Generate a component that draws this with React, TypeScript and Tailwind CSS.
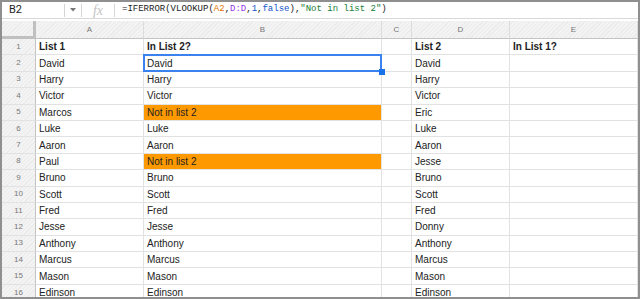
import React from "react";

const rows: [string, string, string, boolean][] = [
  ["David", "David", "David", false],
  ["Harry", "Harry", "Harry", false],
  ["Victor", "Victor", "Victor", false],
  ["Marcos", "Not in list 2", "Eric", true],
  ["Luke", "Luke", "Luke", false],
  ["Aaron", "Aaron", "Aaron", false],
  ["Paul", "Not in list 2", "Jesse", true],
  ["Bruno", "Bruno", "Bruno", false],
  ["Scott", "Scott", "Scott", false],
  ["Fred", "Fred", "Fred", false],
  ["Jesse", "Jesse", "Donny", false],
  ["Anthony", "Anthony", "Anthony", false],
  ["Marcus", "Marcus", "Marcus", false],
  ["Mason", "Mason", "Mason", false],
  ["Edinson", "Edinson", "Edinson", false],
];

const hatch =
  "bg-[repeating-linear-gradient(135deg,#f3f3f3_0px,#f3f3f3_2px,#ebebeb_2px,#ebebeb_3px)]";

function FormulaBar() {
  return (
    <div className="flex items-center h-[17px] border-b border-[#d8d8d8] bg-white shrink-0">
      <div className="w-[63px] pl-[7px] text-[11px] text-[#222] font-['Roboto','Liberation_Sans',sans-serif] border-r border-[#d6d6d6] h-[13px] flex items-center">
        B2
      </div>
      <div className="w-[17px] flex justify-center items-center border-r border-[#d6d6d6] h-[13px]">
        <svg width="6" height="4" viewBox="0 0 6 4">
          <path d="M0 0h6L3 3.5z" fill="#777" />
        </svg>
      </div>
      <div className="w-[33px] flex justify-center items-center border-r border-[#d6d6d6] h-[13px] text-[14px] italic text-[#c4c4c4] font-['Liberation_Serif',serif]">
        fx
      </div>
      <div className="pl-[7px] text-[9px] text-[#222] font-['Liberation_Mono',monospace] whitespace-pre">
        =IFERROR(VLOOKUP(<span className="text-[#e37400]">A2</span>,
        <span className="text-[#9334e6]">D:D</span>,<span className="text-[#1155cc]">1</span>,
        <span className="text-[#1155cc]">false</span>),
        <span className="text-[#188038]">"Not in list 2"</span>)
      </div>
    </div>
  );
}

function Cell({
  children,
  bold,
  orange,
  selected,
}: {
  children?: React.ReactNode;
  bold?: boolean;
  orange?: boolean;
  selected?: boolean;
}) {
  return (
    <div
      className={`relative flex items-center pl-[3px] border-r border-b border-[#e2e2e2] text-[10px] text-[#222] whitespace-nowrap ${
        bold ? "font-bold" : ""
      } ${orange ? "bg-[#ff9900]" : "bg-white"}`}
    >
      {children}
      {selected && (
        <>
          <div className="absolute z-10 -left-px -top-px -right-px -bottom-px border-2 border-[#3b82f0]" />
          <div className="absolute z-20 -right-[4px] -bottom-[4px] w-[6px] h-[6px] bg-[#1a73e8]" />
        </>
      )}
    </div>
  );
}

function RowHead({ n }: { n: number }) {
  return (
    <div
      className={`flex items-center justify-center text-[8px] text-[#777] border-r border-[#c4c4c4] border-b border-b-[#e2e2e2] ${hatch}`}
    >
      {n}
    </div>
  );
}

export default function App() {
  return (
    <div className="w-[640px] h-[299px] overflow-hidden bg-white border-2 border-[#8f8f8f] flex flex-col font-['Liberation_Sans',Arial,sans-serif]">
      <FormulaBar />
      <div className="h-[2px] shrink-0" />
      <div className="grid grid-cols-[34px_108px_238px_30px_98px_1fr] grid-rows-[18px] auto-rows-[16.4px]">
        {/* header row */}
        <div className={`border-r-[3px] border-b-[3px] border-[#c0c0c0] ${hatch}`} />
        {["A", "B", "C", "D", "E"].map((c) => (
          <div
            key={c}
            className={`flex items-center justify-center text-[8px] text-[#777] border-r border-[#dcdcdc] border-b border-b-[#c4c4c4] ${hatch}`}
          >
            {c}
          </div>
        ))}

        <RowHead n={1} />
        <Cell bold>List 1</Cell>
        <Cell bold>In List 2?</Cell>
        <Cell />
        <Cell bold>List 2</Cell>
        <Cell bold>In List 1?</Cell>

        {rows.map(([a, b, d, orange], i) => (
          <React.Fragment key={i}>
            <RowHead n={i + 2} />
            <Cell>{a}</Cell>
            <Cell orange={orange} selected={i === 0}>
              {b}
            </Cell>
            <Cell />
            <Cell>{d}</Cell>
            <Cell />
          </React.Fragment>
        ))}
      </div>
    </div>
  );
}
